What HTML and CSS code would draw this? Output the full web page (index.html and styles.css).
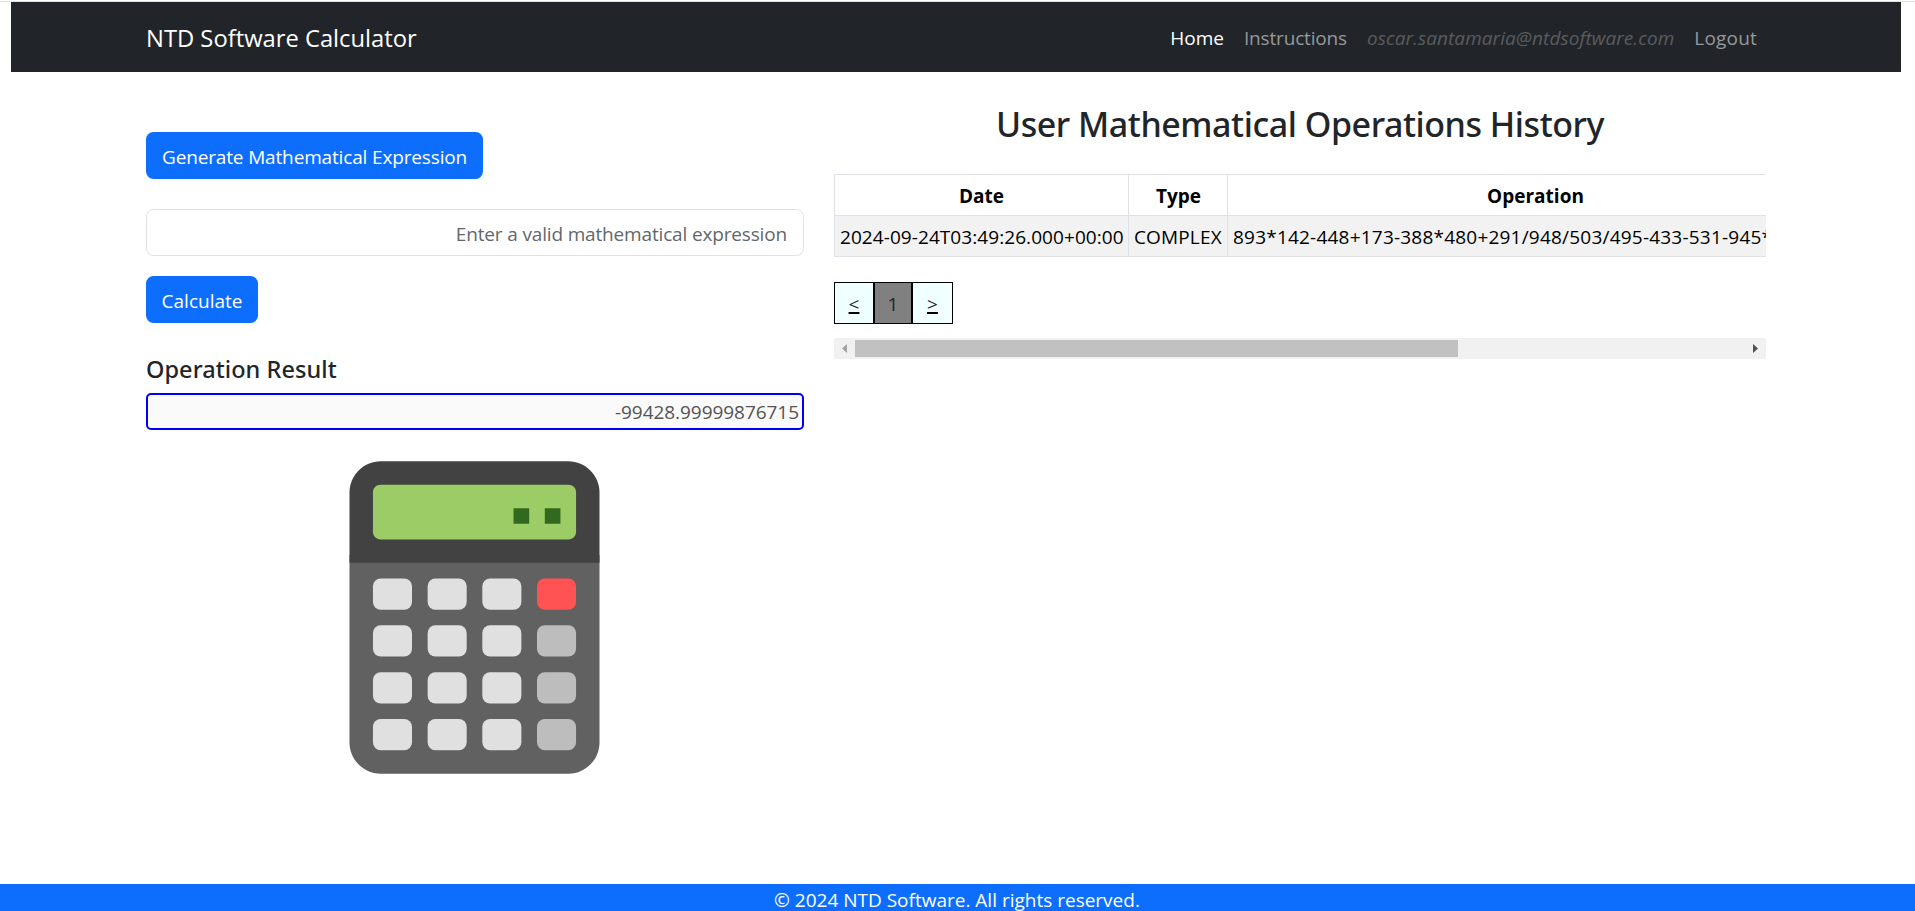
FILE: index.html
```html
<!DOCTYPE html>
<html lang="en">
<head>
<meta charset="utf-8">
<title>NTD Software Calculator</title>
<link rel="stylesheet" href="styles.css">
</head>
<body>
<div class="page">
  <header class="navbar">
    <a class="brand">NTD Software Calculator</a>
    <nav class="nav">
      <a class="nav-link active">Home</a>
      <a class="nav-link instructions">Instructions</a>
      <a class="nav-link user">oscar.santamaria@ntdsoftware.com</a>
      <a class="nav-link logout">Logout</a>
    </nav>
  </header>
  <main class="main">
    <section class="calculator">
      <button class="btn generate">Generate Mathematical Expression</button>
      <input class="expression" type="text" placeholder="Enter a valid mathematical expression">
      <button class="btn calculate">Calculate</button>
      <h4 class="result-title">Operation Result</h4>
      <div class="result">-99428.99999876715</div>
      <svg class="picture" viewBox="0 0 48 48">
        <path fill="#616161" d="M40 16H8v24c0 2.2 1.8 4 4 4h24c2.2 0 4-1.8 4-4z"/>
        <path fill="#424242" d="M36 4H12C9.800 4 8 5.800 8 8v9h32V8c0-2.200-1.800-4-4-4z"/>
        <path fill="#9CCC65" d="M36 14H12c-.6 0-1-.4-1-1V8c0-.6.4-1 1-1h24c.6 0 1 .4 1 1v5c0 .6-.4 1-1 1z"/>
        <path fill="#33691E" d="M33 10h2v2h-2zM29 10h2v2h-2z"/>
        <rect x="32" y="19" width="5" height="4" rx="1" fill="#FF5252"/>
        <g fill="#E0E0E0">
          <rect x="11" y="19" width="5" height="4" rx="1"/><rect x="18" y="19" width="5" height="4" rx="1"/><rect x="25" y="19" width="5" height="4" rx="1"/>
          <rect x="11" y="25" width="5" height="4" rx="1"/><rect x="18" y="25" width="5" height="4" rx="1"/><rect x="25" y="25" width="5" height="4" rx="1"/>
          <rect x="11" y="31" width="5" height="4" rx="1"/><rect x="18" y="31" width="5" height="4" rx="1"/><rect x="25" y="31" width="5" height="4" rx="1"/>
          <rect x="11" y="37" width="5" height="4" rx="1"/><rect x="18" y="37" width="5" height="4" rx="1"/><rect x="25" y="37" width="5" height="4" rx="1"/>
        </g>
        <g fill="#BDBDBD">
          <rect x="32" y="25" width="5" height="4" rx="1"/><rect x="32" y="31" width="5" height="4" rx="1"/><rect x="32" y="37" width="5" height="4" rx="1"/>
        </g>
      </svg>
    </section>
    <section class="history">
      <h2 class="history-title">User Mathematical Operations History</h2>
      <div class="table-clip">
        <div class="table">
          <div class="cell head">Date</div>
          <div class="cell head type">Type</div>
          <div class="cell head">Operation</div>
          <div class="cell date">2024-09-24T03:49:26.000+00:00</div>
          <div class="cell complex">COMPLEX</div>
          <div class="cell operation">893*142-448+173-388*480+291/948/503/495-433-531-945*</div>
        </div>
      </div>
      <ul class="pagination">
        <li class="page-item prev"><a>&lt;</a></li>
        <li class="page-item current">1</li>
        <li class="page-item next"><a>&gt;</a></li>
      </ul>
      <div class="scrollbar">
        <svg class="arrow" viewBox="0 0 21 21"><path fill="#a3a3a3" d="M13 6v9l-5-4.500z"/></svg>
        <div class="track"><div class="thumb"></div></div>
        <svg class="arrow" viewBox="0 0 21 21"><path fill="#505050" d="M8 6v9l5-4.500z"/></svg>
      </div>
    </section>
  </main>
  <footer class="footer">© 2024 NTD Software. All rights reserved.</footer>
</div>
</body>
</html>
```
FILE: styles.css
```css
* { box-sizing: border-box; }

body {
  margin: 0;
  background: #fff;
  color: #212529;
  font: 19px/30px "Open Sans", "Noto Sans", sans-serif;
}

.page {
  display: flex;
  flex-direction: column;
  height: 911px;
  overflow: hidden;
  border-top: 1px solid #fff;
}

.page::before {
  content: "";
  flex: none;
  height: 1px;
  background: #dee2e6;
}

.navbar {
  flex: none;
  display: flex;
  align-items: center;
  justify-content: space-between;
  height: 70px;
  margin: 0 14px 0 11px;
  padding: 1px 144px 0 135px;
  background: #212529;
}

.brand { padding-top: 2px; color: #fff; font-size: 23.75px; line-height: 37px; }

.nav { display: flex; gap: 20px; color: #96989a; padding-top: 1px; }
.nav-link.active { color: #fff; }
.instructions { letter-spacing: -0.16px; }
.user { color: #595c5f; font-style: italic; letter-spacing: 0.07px; }
.logout { letter-spacing: 0.2px; }

.main {
  flex: 1;
  min-height: 0;
  display: grid;
  grid-template-columns: 658px 932px;
  column-gap: 30px;
  padding-left: 146px;
  align-content: start;
}

.calculator {
  display: flex;
  flex-direction: column;
  align-items: flex-start;
  padding-top: 60px;
}

.btn {
  height: 47px;
  padding: 2px 16px 0;
  border: 0;
  border-radius: 7.5px;
  background: #0d6efd;
  color: #fff;
  font: inherit;
}

.generate { width: 337px; letter-spacing: -0.15px; white-space: nowrap; }
.calculate { width: 112px; padding-inline: 0; }

.expression {
  width: 658px;
  height: 47px;
  margin: 30px 0 20px;
  padding: 2px 16px 0 15px;
  border: 1px solid #dee2e6;
  border-radius: 7.5px;
  background: #fff;
  font: inherit;
  letter-spacing: -0.16px;
  text-align: right;
}

.expression::placeholder { color: #63676b; opacity: 1; }

.result-title {
  margin: 28px 0 6px;
  font: 500 23.5px/36px "Noto Sans", sans-serif;
  letter-spacing: 0.06px;
}

.result {
  width: 658px;
  height: 37px;
  padding: 1px 3px 0;
  border: 2px solid #0000f8;
  border-radius: 5px;
  background: #fafafa;
  color: #545454;
  line-height: 33px;
  letter-spacing: -0.05px;
  text-align: right;
}

.picture { width: 375px; height: 375px; margin-left: 141px; }

.history { min-width: 0; padding-top: 30px; }

.history-title {
  margin: 0 0 27px;
  font: 500 34px/45px "Noto Sans", sans-serif;
  letter-spacing: -0.45px;
  text-align: center;
}

.table-clip { overflow: hidden; }

.table {
  display: grid;
  grid-template-columns: 294px 99px 616px;
  grid-template-rows: 41px 41px;
  width: max-content;
  border: solid #dee2e6;
  border-width: 1px 0 0 1px;
  color: #000;
}

.cell {
  padding: 6px 0 0 5px;
  border: solid #dee2e6;
  border-width: 0 1px 1px 0;
  background: #f2f2f2;
  white-space: nowrap;
}

.head {
  padding-left: 0;
  background: #fff;
  font-weight: 700;
  text-align: center;
}

.type { padding-left: 1px; }
.date { letter-spacing: 0.07px; }
.complex { letter-spacing: 0.15px; }
.operation { letter-spacing: 0.21px; }

.pagination {
  display: flex;
  margin: 25px 0 14px;
  padding: 0;
  list-style: none;
}

.page-item {
  height: 42px;
  padding-top: 5px;
  border: 1px solid #000;
  background: azure;
  text-align: center;
}

.page-item a {
  padding: 0 1px;
  text-decoration: underline 2px #000;
  text-underline-offset: 1px;
}

.prev { width: 40px; padding-top: 6px; }
.current { width: 38px; padding-top: 6px; background: #808080; }
.next { width: 41px; padding-top: 6px; }

.scrollbar { display: flex; height: 21px; background: #f1f1f1; }
.arrow { flex: none; width: 21px; height: 21px; }
.track { flex: 1; padding: 2px 0; }
.thumb { width: 603px; height: 17px; background: #c1c1c1; }

.footer {
  flex: none;
  height: 27px;
  overflow: hidden;
  background: #0d6efd;
  color: #fff;
  line-height: 32px;
  padding-right: 1px;
  text-align: center;
}
```
